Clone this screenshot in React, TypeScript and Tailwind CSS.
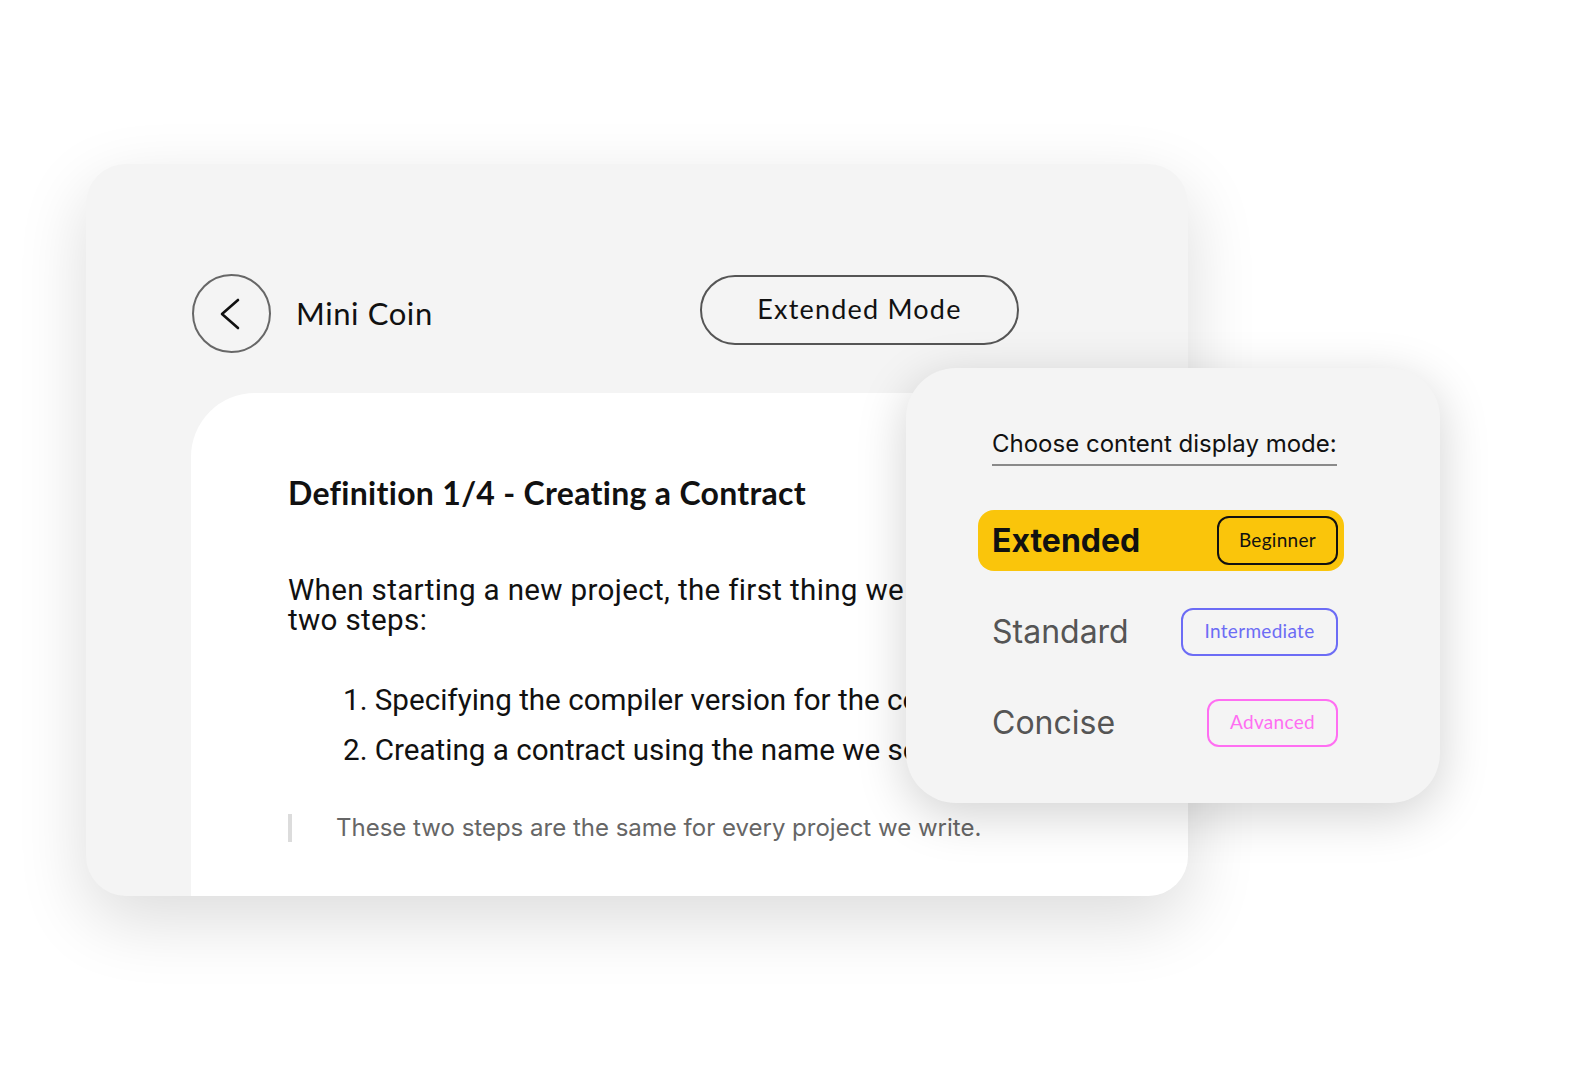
import React from "react";

export default function App() {
  return (
    <div className="relative w-full min-h-[1068px] bg-white overflow-hidden">
      <div className="pt-[164px] pl-[86px]">
        {/* Main card */}
        <div className="w-[1102px] h-[732px] bg-[#f4f4f4] rounded-[40px] overflow-hidden flex flex-col shadow-[0_24px_70px_rgba(0,0,0,0.14)]">
          {/* Header */}
          <div className="h-[229px] pl-[106px] pt-[110px]">
            <div className="flex items-center">
              <div className="w-[508px] flex items-center">
                <div className="w-[79px] h-[79px] rounded-full border-2 border-[#676767] flex items-center justify-center">
                  <svg width="22" height="32" viewBox="0 0 22 32" className="mr-[4px]">
                    <polyline points="19,2 3,16 19,30" fill="none" stroke="#111" strokeWidth="2.6" strokeLinecap="round" strokeLinejoin="round" />
                  </svg>
                </div>
                <span className="ml-[25px] text-[31px] text-[#111] leading-none tracking-[0.6px]" style={{ fontFamily: "Lato, sans-serif" }}>Mini Coin</span>
              </div>
              <div className="w-[319px] h-[70px] rounded-full border-2 border-[#555] flex items-center justify-center -mt-[8px]">
                <span className="text-[27px] text-[#111] tracking-[1.2px]" style={{ fontFamily: "Lato, sans-serif" }}>Extended Mode</span>
              </div>
            </div>
          </div>
          {/* White panel */}
          <div className="ml-[105px] flex-1 bg-white rounded-tl-[64px] pl-[97px] pt-[80px]">
            <h1 className="text-[32px] font-bold text-[#111] leading-[40px] tracking-[0.3px] whitespace-nowrap" style={{ fontFamily: "Lato, sans-serif" }}>
              Definition 1/4 - Creating a Contract
            </h1>
            <p className="mt-[62px] text-[29.6px] leading-[30px] tracking-[0.33px] text-[#111] whitespace-nowrap" style={{ fontFamily: "Roboto, sans-serif" }}>
              When starting a new project, the first thing we need to do is follow
              <br />
              two steps:
            </p>
            <ol className="mt-[50px] pl-[55px] flex flex-col gap-[20px] text-[29.6px] leading-[30px] text-[#111] whitespace-nowrap" style={{ fontFamily: "Roboto, sans-serif" }}>
              <li>1. Specifying the compiler version for the code</li>
              <li>2. Creating a contract using the name we set</li>
            </ol>
            <div className="mt-[49px] flex items-center border-l-4 border-[#dcdcdc] pl-[44px] h-[28px]">
              <span className="text-[24px] text-[#666] whitespace-nowrap" style={{ fontFamily: "Inter, sans-serif" }}>
                These two steps are the same for every project we write.
              </span>
            </div>
          </div>
        </div>
      </div>

      {/* Popup */}
      <div
        className="absolute left-[906px] top-[368px] w-[534px] h-[435px] bg-[#f4f4f4] rounded-[50px] shadow-[0_12px_50px_rgba(0,0,0,0.18)] pl-[86px] pr-[102px] pt-[62px] flex flex-col"
        style={{ fontFamily: "Inter, sans-serif" }}
      >
        <div className="self-start border-b-2 border-[#8a8a8a] pb-[6px]">
          <span className="text-[24px] text-[#111] leading-[28px] block whitespace-nowrap">Choose content display mode:</span>
        </div>
        <div className="mt-[44px] flex flex-col gap-[30px]">
          <div className="-ml-[14px] -mr-[6px] h-[61px] rounded-[16px] bg-[#fac50b] flex items-center justify-between pl-[14px] pr-[6px]">
            <span className="text-[32px] font-bold text-[#111]">Extended</span>
            <div className="w-[121px] h-[49px] rounded-[12px] border-2 border-[#111] flex items-center justify-center">
              <span className="text-[19px] text-[#111] tracking-[0.3px]" style={{ fontFamily: "Lato, sans-serif" }}>Beginner</span>
            </div>
          </div>
          <div className="h-[61px] flex items-center justify-between">
            <span className="text-[32px] text-[#555]">Standard</span>
            <div className="w-[157px] h-[48px] rounded-[12px] border-2 border-[#6c6cf5] flex items-center justify-center">
              <span className="text-[19px] text-[#6c6cf5] tracking-[0.3px]" style={{ fontFamily: "Lato, sans-serif" }}>Intermediate</span>
            </div>
          </div>
          <div className="h-[61px] flex items-center justify-between">
            <span className="text-[32px] text-[#555]">Concise</span>
            <div className="w-[131px] h-[48px] rounded-[12px] border-2 border-[#ff6ef2] flex items-center justify-center">
              <span className="text-[19px] text-[#ff6ef2] tracking-[0.3px]" style={{ fontFamily: "Lato, sans-serif" }}>Advanced</span>
            </div>
          </div>
        </div>
      </div>
    </div>
  );
}
